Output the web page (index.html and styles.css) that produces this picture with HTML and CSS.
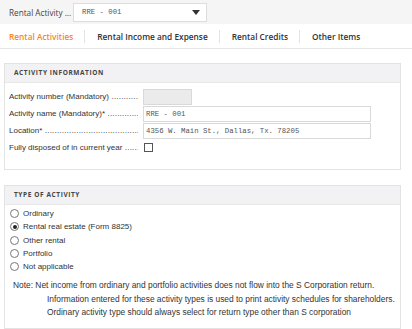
FILE: index.html
```html
<!DOCTYPE html>
<html lang="en">
<head>
  <meta charset="UTF-8">
  <title>Rental Activities</title>
  <link rel="stylesheet" href="styles.css">
</head>
<body>
  <div class="topbar">
    <span class="top-label">Rental Activity ...</span>
    <div class="select">
      <span>RRE - 001</span>
      <svg class="caret" width="8" height="5" viewBox="0 0 8 5"><path d="M0 0h8L4 5z" fill="#333"/></svg>
    </div>
  </div>

  <div class="tabs">
    <a class="tab active">Rental Activities</a>
    <span class="sep"></span>
    <a class="tab">Rental Income and Expense</a>
    <span class="sep"></span>
    <a class="tab">Rental Credits</a>
    <span class="sep"></span>
    <a class="tab">Other Items</a>
  </div>

  <div class="panel first">
    <div class="panel-head">ACTIVITY INFORMATION</div>
    <div class="panel-body">
      <div class="row">
        <label class="lbl">Activity number (Mandatory)</label>
        <div class="input short disabled"></div>
      </div>
      <div class="row">
        <label class="lbl">Activity name (Mandatory)*</label>
        <div class="input">RRE - 001</div>
      </div>
      <div class="row">
        <label class="lbl">Location*</label>
        <div class="input">4356 W. Main St., Dallas, Tx. 78205</div>
      </div>
      <div class="row">
        <label class="lbl">Fully disposed of in current year</label>
        <span class="check"></span>
      </div>
    </div>
  </div>

  <div class="panel second">
    <div class="panel-head">TYPE OF ACTIVITY</div>
    <div class="panel-body radios">
      <div class="radio"><span class="dot"></span>Ordinary</div>
      <div class="radio"><span class="dot on"></span>Rental real estate (Form 8825)</div>
      <div class="radio"><span class="dot"></span>Other rental</div>
      <div class="radio"><span class="dot"></span>Portfolio</div>
      <div class="radio"><span class="dot"></span>Not applicable</div>
      <div class="note">
        <p>Note: Net income from ordinary and portfolio activities does not flow into the S Corporation return.</p>
        <p class="indent">Information entered for these activity types is used to print activity schedules for shareholders.</p>
        <p class="indent">Ordinary activity type should always select for return type other than S corporation</p>
      </div>
    </div>
  </div>
</body>
</html>
```

FILE: styles.css
```css
body {
  margin: 0;
  background: #fff;
  font-family: "Liberation Sans", Arial, sans-serif;
  color: #333;
}
.topbar {
  height: 24px;
  background: #f5f5f5;
  display: flex;
  align-items: center;
  padding-left: 9px;
}
.top-label {
  font-family: "Open Sans", sans-serif;
  font-size: 8.2px;
  color: #444;
  width: 64px;
  white-space: nowrap;
  overflow: hidden;
}
.select {
  width: 134px;
  height: 19px;
  background: #fff;
  border: 1px solid #ddd;
  display: flex;
  align-items: center;
  justify-content: space-between;
  padding: 0 6px 0 8px;
  box-sizing: border-box;
  font-family: "Liberation Mono", monospace;
  font-size: 7.3px;
  color: #555;
}
.tabs {
  height: 24px;
  display: flex;
  align-items: center;
  border-bottom: 1px solid #e6e6e6;
  padding-left: 9px;
}
.tab {
  font-family: "Open Sans", sans-serif;
  font-weight: 600;
  font-size: 8.3px;
  color: #333;
}
.tab.active {
  color: #f7861e;
}
.sep {
  width: 1px;
  height: 13px;
  background: #e3e3e3;
  margin: 0 12px 0 11px;
}
.panel {
  margin: 14px 11px 0 4px;
  border: 1px solid #e3e3e3;
}
.second {
  margin-top: 15px;
}
.panel-head {
  height: 18px;
  line-height: 18px;
  background: #f2f2f4;
  border-bottom: 1px solid #e8e8e8;
  padding-left: 9px;
  font-family: "Open Sans", sans-serif;
  font-weight: 700;
  font-size: 6.5px;
  letter-spacing: 0.6px;
  color: #444;
}
.panel-body {
  padding: 5px 5px 13px 4px;
}
.row {
  display: flex;
  align-items: center;
  height: 17px;
  font-size: 8px;
}
.lbl {
  width: 129px;
  margin-right: 5px;
  overflow: hidden;
  white-space: nowrap;
}
.lbl::after {
  content: " ..................................................";
  letter-spacing: 0.2px;
}
.input {
  width: 228px;
  height: 16px;
  box-sizing: border-box;
  border: 1px solid #d9d9d9;
  background: #fff;
  font-family: "Liberation Mono", monospace;
  font-size: 7.3px;
  color: #555;
  padding-left: 2px;
  line-height: 14px;
  white-space: nowrap;
}
.input.short {
  width: 49px;
}
.input.disabled {
  background: #ebebeb;
}
.check {
  width: 7px;
  height: 7px;
  border: 1px solid #555;
  margin-left: 1px;
}
.radios {
  padding: 2px 5px 8px 5px;
}
.radio {
  display: flex;
  align-items: center;
  height: 13.3px;
  font-size: 8px;
}
.dot {
  width: 7px;
  height: 7px;
  border: 1px solid #777;
  border-radius: 50%;
  margin-right: 4px;
  position: relative;
}
.dot.on::after {
  content: "";
  position: absolute;
  left: 1.5px;
  top: 1.5px;
  width: 4px;
  height: 4px;
  border-radius: 50%;
  background: #222;
}
.note {
  margin: 6px 0 0 3px;
  font-size: 8.4px;
}
.note p {
  margin: 0;
  line-height: 13.5px;
  white-space: nowrap;
}
.note .indent {
  margin-left: 34px;
}
```
